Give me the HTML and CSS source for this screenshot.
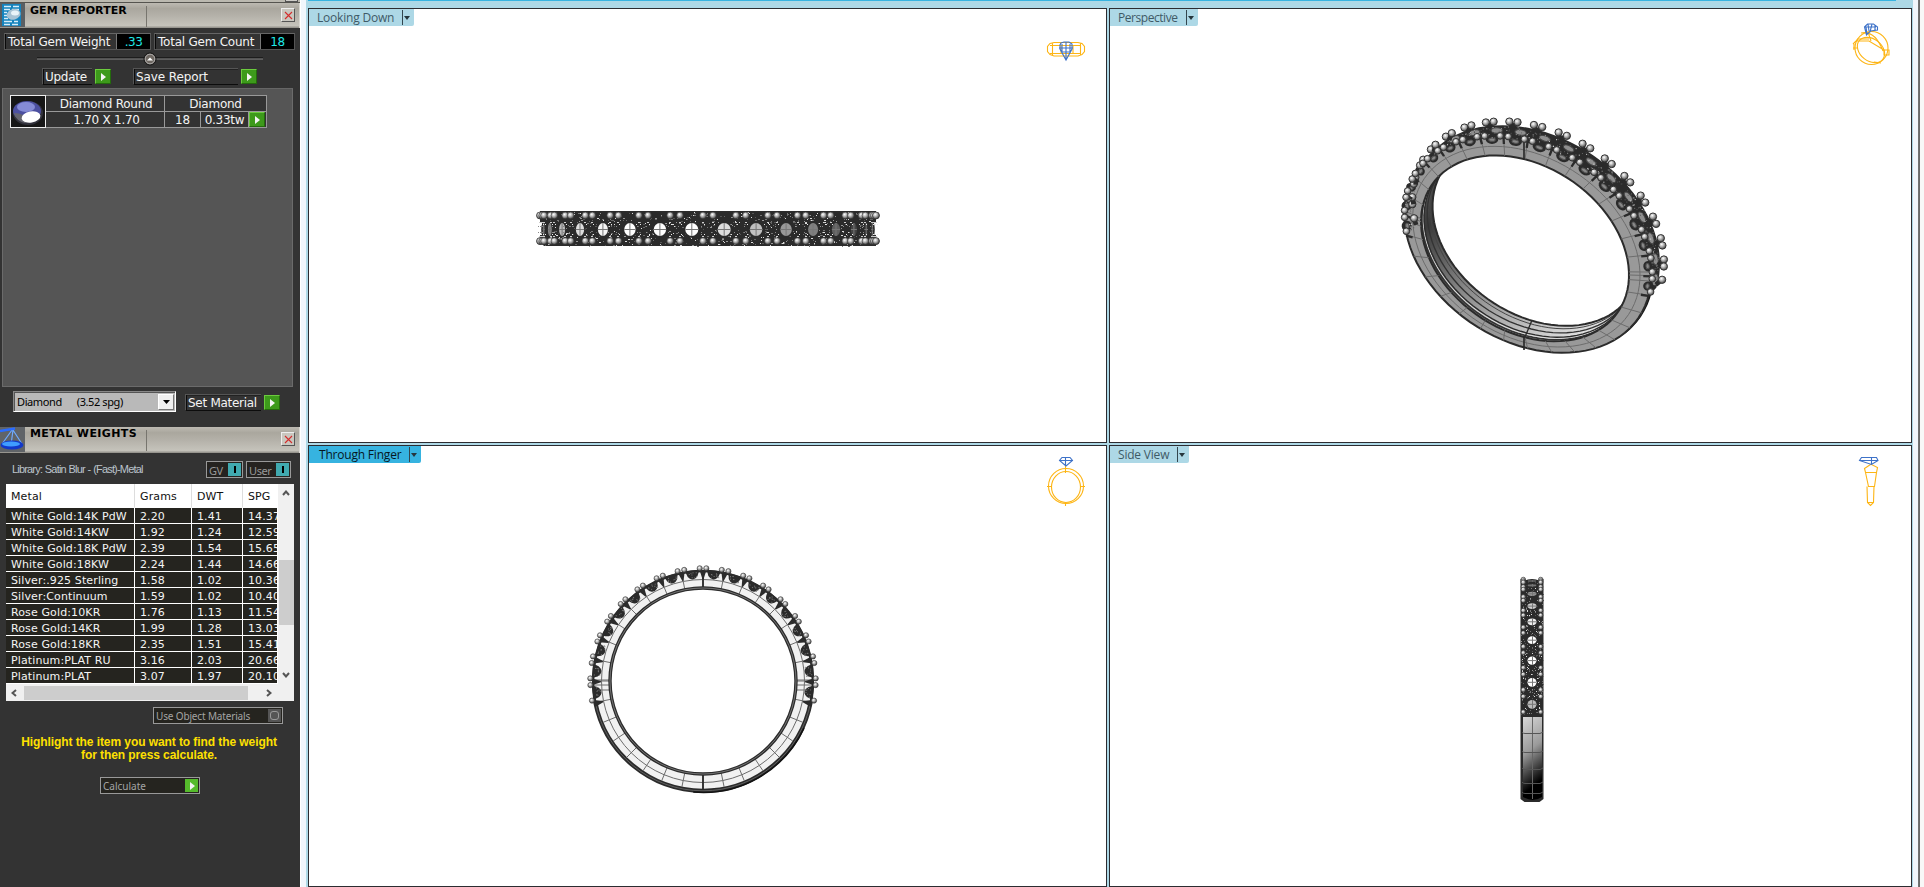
FILE: index.html
```html
<!DOCTYPE html>
<html lang="en">
<head>
<meta charset="utf-8">
<title>Gem Reporter</title>
<link rel="stylesheet" href="styles.css">
</head>
<body>
<div class="app">
  <aside class="sidebar">
    <div class="stub"><i></i></div>
    <header class="bar">
      <svg class="bar-icon" width="25" height="24" viewBox="0 0 25 24">
        <rect width="25" height="24" fill="#5a5f63"/><rect x="2" y="1" width="19" height="22" fill="#1583bd"/>
        <path d="M4 3.500h7M13 3.500h6M4 6.500h6M12 6.500h7M4 9.500h3M4 12.500h3M4 15.500h4M4 18.500h8M14 18.500h4M4 21.500h6M12 21.500h6" stroke="#d7eefa" stroke-width="1.400"/>
        <ellipse cx="13.500" cy="11.500" rx="7" ry="5.200" fill="#a9c3d4" transform="rotate(-15 13 11)"/><ellipse cx="15" cy="10" rx="4" ry="2.500" fill="#e9f3f8"/>
      </svg>
      <h1 class="bar-title">GEM REPORTER</h1>
      <span class="close"><svg width="9" height="9" viewBox="0 0 9 9"><path d="M1 1l7 7M8 1l-7 7" stroke="#d42c2c" stroke-width="1.100"/></svg></span>
    </header>
    <div class="totals">
      <div class="total t1"><span>Total Gem Weight</span><b>.33</b></div>
      <div class="total t2"><span>Total Gem Count</span><b>18</b></div>
    </div>
    <div class="splitter"><svg width="226" height="14" viewBox="0 0 226 14"><path d="M0 6h226" stroke="#080808" stroke-width="1"/><path d="M0 7h226" stroke="#888" stroke-width="1"/><circle cx="113" cy="7" r="6" fill="#6e6862" stroke="#111" stroke-width="1"/><circle cx="113" cy="7" r="4.800" fill="none" stroke="#bbb" stroke-width=".8"/><path d="M110 8.500l3-3 3 3z" fill="#fff"/></svg></div>
    <div class="actions">
      <span class="cmd cmd-update">Update</span><button class="go"></button>
      <span class="cmd cmd-save">Save Report</span><button class="go"></button>
    </div>
    <section class="gems">
      <div class="gem">
        <div class="thumb"><svg width="34" height="31" viewBox="0 0 34 31"><rect width="34" height="31" fill="#171717"/><ellipse cx="17" cy="17" rx="15" ry="12" fill="#32323c"/><ellipse cx="16" cy="15" rx="14" ry="10" fill="#4c50a0"/><ellipse cx="15" cy="11" rx="9" ry="5" fill="#858bd6"/><path d="M3 17q10 0 14 7l-3 3q-9-2-11-10z" fill="#65656f"/><ellipse cx="20" cy="21" rx="9.500" ry="5.500" fill="#fff" transform="rotate(-9 20 21)"/></svg></div>
        <div class="gem-grid">
          <span class="g-name">Diamond Round</span><span class="g-mat">Diamond</span>
          <span class="g-size">1.70 X 1.70</span><span>18</span><span>0.33tw</span><span class="g-go"><button class="go"></button></span>
        </div>
      </div>
    </section>
    <div class="material">
      <div class="combo"><span>Diamond</span><span class="spg">(3.52 spg)</span><i><svg width="7" height="4"><path d="M0 0h7l-3.500 4z"/></svg></i></div>
      <span class="cmd cmd-set">Set Material</span><button class="go"></button>
    </div>
    <header class="bar bar2">
      <svg class="bar-icon" width="25" height="25" viewBox="0 0 25 25">
        <rect width="25" height="25" fill="#606468"/>
        <path d="M12 3L2 17M13 3l9 14M13 3l-2 15" stroke="#6eaaff" stroke-width="1.200" fill="none"/><path d="M0 4l15-2.500" stroke="#2a6cff" stroke-width="2.500"/>
        <ellipse cx="12" cy="18" rx="11.500" ry="4.500" fill="#1238c9"/><ellipse cx="11" cy="17" rx="9" ry="2.400" fill="#3f9dff"/>
      </svg>
      <h1 class="bar-title">METAL WEIGHTS</h1>
      <span class="close"><svg width="9" height="9" viewBox="0 0 9 9"><path d="M1 1l7 7M8 1l-7 7" stroke="#d42c2c" stroke-width="1.100"/></svg></span>
    </header>
    <div class="library">
      <span class="lib-name">Library: Satin Blur - (Fast)-Metal</span>
      <span class="toggle tg-gv">GV<i></i></span><span class="toggle tg-user">User<i></i></span>
    </div>
    <div class="table-box">
      <div class="table">
        <div class="tr th"><span>Metal</span><span>Grams</span><span>DWT</span><span>SPG</span></div>
        <div class="tr"><span>White Gold:14K PdW</span><span>2.20</span><span>1.41</span><span>14.37</span></div>
        <div class="tr"><span>White Gold:14KW</span><span>1.92</span><span>1.24</span><span>12.59</span></div>
        <div class="tr"><span>White Gold:18K PdW</span><span>2.39</span><span>1.54</span><span>15.65</span></div>
        <div class="tr"><span>White Gold:18KW</span><span>2.24</span><span>1.44</span><span>14.66</span></div>
        <div class="tr"><span>Silver:.925 Sterling</span><span>1.58</span><span>1.02</span><span>10.36</span></div>
        <div class="tr"><span>Silver:Continuum</span><span>1.59</span><span>1.02</span><span>10.40</span></div>
        <div class="tr"><span>Rose Gold:10KR</span><span>1.76</span><span>1.13</span><span>11.54</span></div>
        <div class="tr"><span>Rose Gold:14KR</span><span>1.99</span><span>1.28</span><span>13.03</span></div>
        <div class="tr"><span>Rose Gold:18KR</span><span>2.35</span><span>1.51</span><span>15.41</span></div>
        <div class="tr"><span>Platinum:PLAT RU</span><span>3.16</span><span>2.03</span><span>20.66</span></div>
        <div class="tr"><span>Platinum:PLAT</span><span>3.07</span><span>1.97</span><span>20.10</span></div>
      </div>
      <div class="vscroll"><svg width="8" height="6"><path d="M1 5l3-3.500L7 5" class="chev"/></svg><i></i><svg width="8" height="6"><path d="M1 1l3 3.500L7 1" class="chev"/></svg></div>
      <div class="hscroll"><svg width="6" height="8"><path d="M5 1L1.500 4 5 7" class="chev"/></svg><i></i><svg width="6" height="8"><path d="M1 1l3.500 3L1 7" class="chev"/></svg></div>
    </div>
    <div class="flat flat-obj"><span>Use Object Materials</span><i class="off"></i></div>
    <p class="hint">Highlight the item you want to find the weight<br>for then press calculate.</p>
    <div class="flat flat-calc"><span>Calculate</span><button class="go"></button></div>
  </aside>
  <div class="gutter"></div>
  <main class="views">
    <div class="accent"></div>
    <section class="view">
      <div class="tab">Looking Down<i></i></div>
      <svg class="scene" id="top" viewBox="309 9 797 433"></svg>
    </section>
    <section class="view">
      <div class="tab tab-persp">Perspective<i></i></div>
      <svg class="scene" id="persp" viewBox="1110 9 801 433"></svg>
    </section>
    <section class="view">
      <div class="tab active">Through Finger<i></i></div>
      <svg class="scene" id="front" viewBox="309 446 797 440"></svg>
    </section>
    <section class="view">
      <div class="tab">Side View<i></i></div>
      <svg class="scene" id="side" viewBox="1110 446 801 440"></svg>
    </section>
  </main>
  <div class="edge"></div>
</div>
<svg width="0" height="0" class="defs"><defs>
  <radialGradient id="bead" cx=".4" cy=".35" r=".65"><stop offset="0" stop-color="#fff"/><stop offset=".45" stop-color="#b5b5b5"/><stop offset="1" stop-color="#444"/></radialGradient>
  <linearGradient id="shank" x1="0" y1="0" x2=".18" y2="1"><stop offset="0" stop-color="#d8d8d8"/><stop offset=".45" stop-color="#9a9a9a"/><stop offset=".72" stop-color="#3c3c3c"/><stop offset=".9" stop-color="#000"/></linearGradient>
  <linearGradient id="bore" x1="0" y1="0" x2=".7" y2="1"><stop offset="0" stop-color="#777"/><stop offset=".3" stop-color="#3a3a3a"/><stop offset=".6" stop-color="#8a8a8a"/><stop offset="1" stop-color="#e0e0e0"/></linearGradient>
</defs></svg>
<script src="rings.js"></script>
</body>
</html>
```

FILE: styles.css
```css
* { box-sizing: border-box; }
body { margin: 0; width: 1924px; height: 887px; overflow: hidden; background: #add8e6; font-family: Verdana, "DejaVu Sans", sans-serif; }
button { padding: 0; }
.app { display: flex; height: 887px; }
.defs { position: absolute; }

.sidebar { width: 300px; flex: none; background: #333; color: #f4f4f4; font-size: 12px; }
.gutter { width: 6px; flex: none; background: #f1f6fc; border-left: 1px solid #fff; }
.edge { width: 11px; flex: none; background: linear-gradient(90deg, #f1f6fc 5px, #777 5px, #666 7px, #f8f8f8 7px); }

.stub { height: 3px; background: #bbb9b0; border-bottom: 1px solid #55544f; display: flex; justify-content: flex-end; }
.stub i { width: 13px; height: 2px; margin-right: 2px; background: #cfcdc8; border: solid #555; border-width: 0 1px 1px; }

.bar { display: flex; height: 25px; background: linear-gradient(#bdbab2, #aaa79e 22%, #b4b1a9 50%, #c5c3bb 90%, #8c8a84); border-right: 1px solid #d8d6d0; }
.bar2 { height: 26px; }
.bar-icon { flex: none; }
.bar-title { margin: 3px 0 1px; padding-left: 5px; width: 122px; border-right: 1px solid #77756e; font-size: 11px; line-height: 10px; height: 21px; color: #000; letter-spacing: .05px; white-space: nowrap; }
.bar2 .bar-title { line-height: 8px; letter-spacing: .4px; }
.close { width: 14px; height: 14px; margin: 5px 4px 0 auto; background: #c9c7bf; border: 1px solid #eee; border-right-color: #555; border-bottom-color: #555; display: flex; align-items: center; justify-content: center; }

.totals { display: flex; gap: 3px; padding: 5px 0 0 4px; }
.total { display: flex; height: 17px; border: 1px solid #555; border-top-color: #666; line-height: 16px; white-space: nowrap; }
.total span { flex: 1; padding-left: 2px; border-left: 1px solid #0a0a0a; letter-spacing: -.23px; font-size: 12px; }
.total b { width: 34px; background: #000; color: #1fe8e8; font-weight: 400; text-align: center; border-left: 1px solid #777; letter-spacing: -.5px; }
.t1 { width: 147px; }
.t2 { width: 141px; }

.splitter { padding: 2px 0 0 37px; height: 18px; }
.splitter svg { display: block; }
.actions { display: flex; height: 20px; padding-left: 42px; }
.cmd { height: 17px; border: 1px solid #555; border-right: 0; border-bottom-color: #0c0c0c; box-shadow: inset 1px 0 #0c0c0c, inset 0 1px #222; padding-left: 2px; line-height: 16px; font-size: 12px; white-space: nowrap; letter-spacing: -.28px; }
.cmd-update { width: 50px; margin-right: 3px; }
.cmd-save { width: 105px; margin: 0 3px 0 22px; letter-spacing: -.1px; }
.go { flex: none; width: 16px; height: 15px; margin-top: 1px; border: 1px solid #6ccb3e; border-right-color: #246b0c; border-bottom-color: #246b0c; background: #3d9a1b; display: flex; align-items: center; padding-left: 5px; }
.go::before { content: ""; border: 4px solid transparent; border-left: 5px solid #f4f4f4; border-right: 0; }

.gems { height: 299px; margin: 0 7px 0 2px; background: #555; border: 1px solid #6b6b6b; border-top-color: #666; padding: 6px 0 0 7px; }
.gem { display: flex; width: 257px; }
.thumb { width: 36px; height: 33px; border: 1px solid #eee; flex: none; }
.thumb svg { display: block; }
.gem-grid { display: grid; grid-template-columns: 118px 35px 47px 17px; grid-template-rows: 15px 15px; gap: 1px; background: #999; border: 1px solid #999; border-left: 0; width: 221px; flex: none; }
.gem-grid span { background: #333; text-align: center; line-height: 16px; letter-spacing: -.25px; font-size: 12px; white-space: nowrap; }
.gem-grid .g-name { padding-left: 2px; }
.gem-grid .g-size { padding-left: 3px; }
.g-mat { grid-column: span 3; }
.g-go .go { margin: 0; }

.material { display: flex; padding: 4px 0 0 13px; height: 40px; }
.combo { width: 163px; height: 21px; display: flex; background: #b9b9b9; border: 1px solid #888; border-right-color: #fff; border-bottom-color: #fff; box-shadow: inset 1px 1px #555; color: #000; font: 11px/20px Tahoma, "Noto Sans", sans-serif; letter-spacing: -.4px; padding-left: 3px; }
.spg { margin-left: 15px; }
.combo i { margin: 2px 1px 1px auto; width: 16px; background: #f0f0f0; border: 1px solid #fff; border-right-color: #777; border-bottom-color: #777; display: flex; align-items: center; justify-content: center; }
.cmd-set { width: 76px; margin: 3px 3px 0 9px; }
.material .go { margin-top: 4px; }

.library { display: flex; height: 31px; padding: 8px 0 0 12px; color: #b8b8b8; }
.lib-name { width: 194px; font: 11px/16px "Liberation Sans", Arial, sans-serif; letter-spacing: -.82px; white-space: nowrap; word-spacing: .5px; color: #bcc4cc; }
.toggle { height: 17px; border: 1px solid #999; display: flex; justify-content: space-between; background: #252320; font: 11px/15px "Noto Sans", sans-serif; color: #999; padding: 1px 1px 1px 2px; letter-spacing: -.4px; }
.toggle i { width: 13px; background: #40aab0; display: flex; justify-content: center; align-items: center; }
.toggle i::before { content: ""; width: 2px; height: 7px; background: #000; }
.tg-gv { width: 37px; margin-right: 3px; }
.tg-user { width: 45px; }

.table-box { margin-left: 6px; width: 288px; display: grid; grid-template-columns: 272px 16px; grid-template-rows: 200px 17px; background: #f0f0f0; font-size: 11px; }
.table { overflow: hidden; background: #fff; border-right: 1px solid #fff; }
.tr { display: grid; grid-template-columns: 129px 57px 51px 60px; height: 16px; line-height: 17px; }
.tr span { background: #25241f; border-right: 1px solid #fff; border-bottom: 1px solid #fff; padding-left: 5px; white-space: nowrap; overflow: hidden; letter-spacing: .12px; }
.tr.th { height: 24px; line-height: 25px; color: #111; }
.tr.th span { background: #fff; border-right-color: #ddd; }
.vscroll { display: flex; flex-direction: column; align-items: center; padding: 6px 0; }
.vscroll i { width: 15px; height: 65px; background: #cdcdcd; margin: 64px 0 auto; }
.hscroll { grid-column: span 2; display: flex; align-items: center; padding-left: 5px; }
.hscroll i { width: 224px; height: 14px; background: #cdcdcd; margin: 0 18px 0 7px; }
.chev { fill: none; stroke: #555; stroke-width: 2; }

.flat { display: flex; height: 17px; border: 1px solid #999; background: #25241f; color: #a4a4a4; font: 10px/16px "Noto Sans", sans-serif; padding: 1px; justify-content: space-between; white-space: nowrap; }
.flat span { padding-left: 1px; line-height: 14px; }
.flat .go { width: 13px; height: 13px; margin: 0; border: 0; background: #55bb2b; }
.flat-obj { width: 130px; margin: 6px 0 0 153px; letter-spacing: -.15px; }
.off { width: 13px; background: #555; display: flex; align-items: center; justify-content: center; }
.off::before { content: ""; width: 7px; height: 7px; border: 1px solid #999; border-radius: 3px; }
.hint { margin: 12px 0 0; width: 298px; text-align: center; color: #ffe000; font: bold 12px/13px "Liberation Sans", Arial, sans-serif; letter-spacing: -.08px; white-space: nowrap; }
.flat-calc { width: 100px; margin: 15px 0 0 100px; letter-spacing: 0; }

.views { width: 1607px; flex: none; position: relative; display: grid; grid-template-columns: 799px 803px; grid-template-rows: 435px 442px; gap: 2px; padding: 8px 0 0 2px; background: #add8e6; }
.accent { position: absolute; left: 2px; top: 0; width: 1588px; height: 1px; background: #36b3e0; }
.view { border: 1px solid #2c2c31; background: #fff; display: grid; overflow: hidden; }
.view > * { grid-area: 1 / 1; }
.scene { width: 100%; height: 100%; display: block; }
.tab { z-index: 1; justify-self: start; align-self: start; display: flex; align-items: center; height: 17px; padding: 0 4px 0 8px; background: #add8e6; color: #3f5a66; font: 12px/17px "Open Sans", "Noto Sans", sans-serif; letter-spacing: -.2px; border-bottom-right-radius: 2px; white-space: nowrap; }
.tab-persp { letter-spacing: -.45px; }
.tab i { margin-left: 8px; height: 15px; border-left: 1px solid #33464e; display: flex; align-items: center; padding-left: 1px; }
.tab i::after { content: ""; border: 3.5px solid transparent; border-top: 4px solid #26363d; border-bottom: 0; }
.tab.active { background: #36b3e0; color: #06171f; padding-left: 10px; }
```

FILE: rings.js
```js
const DARK = '#2b2b2b', MID = '#6c6c6c', RAD = Math.PI / 180, STEP = 11.3;
let seed = 7;
const rnd = () => (seed = (seed * 16807) % 2147483647) / 2147483647;
const n = v => v.toFixed(1);
const line = (x1, y1, x2, y2, c, w = 1) => `<path d="M${n(x1)} ${n(y1)}L${n(x2)} ${n(y2)}" stroke="${c}" stroke-width="${w}" fill="none"/>`;
const bead = (x, y, r = 3, w = .6) => `<circle cx="${n(x)}" cy="${n(y)}" r="${r}" fill="url(#bead)" stroke="#333" stroke-width="${w}"/>`;
const speck = (x, y, c, w = 1, h = 1) => `<rect x="${Math.round(x)}" y="${Math.round(y)}" width="${w}" height="${h}" fill="${c}"/>`;
const draw = (id, s) => { document.getElementById(id).innerHTML = s; };
const GREYS = ['#777', '#999', '#555', '#666', '#ddd'];
const icon = s => `<g fill="none" stroke-width="1.1">${s}</g>`;
const GOLD = 'stroke="#fdb515"', BLUE = 'stroke="#3e72c8"';

// Band seen from above
function topView() {
  const cx = 708, cy = 229, R = 165;
  let s = `<path d="M540 211H876V222H874V235H876V246H544L540 242V235H542V222H540Z" fill="${DARK}"/>`;
  for (let i = 0; i < 750; i++) {
    const x = 543 + rnd() * 329, y = 212 + rnd() * 34;
    s += speck(x, y, GREYS[Math.floor(rnd() * 5)], rnd() < .35 ? 2 : 1);
  }
  const shade = ['#444', '#555', '#888', '#bbb', '#ddd', '#f4f4f4', '#fff', '#fff', '#fff', '#ddd', '#c0c0c0', '#999', '#808080', '#606060', '#444', '#333', '#333'];
  for (let i = -8; i < 8; i++) {
    const a = (i + .5) * STEP * RAD;
    const x = cx + R * Math.sin(a), rx = Math.max(1, 6.5 * Math.cos(a)), c = shade[i + 8 + (i < 0 ? 1 : 1)] || '#333';
    s += `<ellipse cx="${n(x)}" cy="229.500" rx="${n(rx + 1.5)}" ry="8" fill="${DARK}"/><ellipse cx="${n(x)}" cy="229.500" rx="${n(rx)}" ry="6.500" fill="${c}"/>`;
    s += line(x - rx, 229.5, x + rx, 229.5, '#777') + line(x, 223, x, 236, '#777');
  }
  for (let k = -8; k <= 8; k++) for (const d of [-1.700, 1.700]) {
    const a = (k * STEP + d) * RAD, x = cx + 168 * Math.sin(a);
    for (const e of [-1, 1]) {
      s += bead(x, cy - .7 + e * 12.8, 3.4);
      s += speck(x - 1, cy + e * 7, '#ccc', 2, 1) + speck(x + 1, cy + e * 5, '#eee') + speck(x - 2, cy + e * 3, '#888');
    }
  }
  s += icon(`<g ${GOLD}><path d="M1050 43.500l4-1h24l4 1 2.500 3v5l-2.500 3-4 1.500h-24l-4-1.500-2.500-3v-5zM1050 45.500h31M1050 53.500h31M1052.500 43v12M1061 45v9M1073 45v9M1080.500 43v12"/></g><g ${BLUE}><path d="M1061 43l3-1h5l3 2v5l-6 11-6-11v-4zM1059 48h14M1066 42v18M1062 44v9M1070 44v9M1061 52h10"/></g>`);
  draw('top', s);
}

// Band seen along the finger axis
function frontView() {
  const cx = 703, cy = 681, p = (r, t) => [cx + r * Math.sin(t * RAD), cy - r * Math.cos(t * RAD)];
  let s = `<circle cx="703" cy="681" r="102" fill="none" stroke="#f1f1f1" stroke-width="18"/>`;
  const [ax, ay] = p(109.800, -101), [bx, by] = p(109.800, 101);
  s += `<path d="M${ax} ${ay}A109.8 109.8 0 0 0 ${bx} ${by}" fill="none" stroke="${DARK}" stroke-width="4.200"/>`;
  s += `<path d="M${ax} ${ay}A109.8 109.8 0 0 0 ${bx} ${by}" fill="none" stroke="${MID}" stroke-width=".8"/>`;
  s += `<path d="M${p(111.500, 115)}A111.5 111.5 0 0 1 ${p(111.500, 185)}" fill="none" stroke="#111" stroke-width="1.500"/>`;
  s += `<path d="M${ax} ${ay}A109.8 109.8 0 1 1 ${bx} ${by}" fill="none" stroke="${DARK}" stroke-width="2.200"/>`;
  s += `<circle cx="703" cy="681" r="101.500" fill="none" stroke="${MID}"/>`;
  for (let k = 0; k < 32; k++) {
    const t = k * 360 / 32, a = p(94, t), b = p(108, t);
    s += line(...a, ...b, MID);
  }
  for (const y of [680, 685, 690]) s += line(594, y, 609, y, MID) + line(797, y, 812, y, MID);
  s += line(703, 570, 703, 589, DARK, 1.8) + line(703, 775, 703, 790, DARK, 1.8);
  s += `<circle cx="703" cy="681" r="93" fill="none" stroke="${DARK}" stroke-width="3.400"/><circle cx="703" cy="681" r="93" fill="none" stroke="#888" stroke-width=".8"/>`;
  for (let i = -9; i < 9; i++) {
    const t = (i + .5) * STEP, [x, y] = p(110.600, t);
    s += `<g transform="translate(${n(x)} ${n(y)}) rotate(${n(t)})"><path d="M-10.500 0L-6-.5H6L10.500 0V1.500H6.500Q5.500 6 3 7.500Q0 9.500-3 7.500Q-5.500 6-6.500 1.500H-10.500Z" fill="${DARK}"/>`;
    for (let j = 0; j < 9; j++) s += `<rect x="${n(-5 + rnd() * 10)}" y="${n(1 + rnd() * 6)}" width="1" height="1" fill="#777"/>`;
    s += '</g>';
  }
  for (let k = -9; k <= 9; k++) {
    const [x, y] = p(110, k * STEP);
    s += `<path transform="translate(${n(x)} ${n(y)}) rotate(${n(k * STEP)})" d="M-3.500 -1H3.500L.6 8H-.6Z" fill="${DARK}"/>`;
    for (const d of [-1.700, 1.700]) if (Math.abs(k * STEP + d) < 101.8) s += bead(...p(112.700, k * STEP + d), 2.6);
  }
  s += icon(`<g ${GOLD}><path d="M1065.500 466v7"/><circle cx="1066" cy="486" r="17.500"/><ellipse cx="1066" cy="487" rx="14.500" ry="15.500"/><path d="M1047 486.500h5M1080 486.500h5M1065.500 502v4"/></g><path ${BLUE} d="M1062 457.500h8l2.500 3-6.500 5.500-6.500-5.500zM1059 460.500h14M1065.500 458v8"/>`);
  draw('front', s);
}

// Band seen edge-on
function sideView() {
  const cx = 1532, cy = 692.5, R = 112;
  let s = `<path d="M1520.500 579l4 1h15l4-1V799l-4 3h-15l-4-3z" fill="${DARK}"/>`;
  for (let i = 0; i < 420; i++) s += speck(1521 + rnd() * 22, 581 + rnd() * 133, GREYS[Math.floor(rnd() * 5)]);
  const sh = ['#444', '#555', '#999', '#ccc', '#eee', '#fff', '#fff', '#fff', '#bbb'];
  for (let i = 0; i < 9; i++) {
    const a = (i + .5) * STEP * RAD, y = cy - R * Math.cos(a), ry = Math.max(.6, 4.4 * Math.sin(a));
    s += `<ellipse cx="${cx}" cy="${n(y)}" rx="6" ry="${n(ry + 1.5)}" fill="${DARK}"/><ellipse cx="${cx}" cy="${n(y)}" rx="4.500" ry="${n(ry)}" fill="${sh[i]}"/>` + line(cx - 4, y, cx + 4, y, '#777') + line(cx + .5, y - ry, cx + .5, y + ry, '#777');
  }
  for (let k = 0; k <= 9; k++) for (const d of [-1.700, 1.700]) {
    const t = k * STEP + d;
    if (t < 0 || t > 101) continue;
    const y = cy - 113 * Math.cos(t * RAD);
    s += bead(1523.300, y, 2.3) + bead(1540.700, y, 2.3);
  }
  s += '<path d="M1523 717h19v80q-9 6-19 0z" fill="url(#shank)"/><path d="M1532.500 717v82" stroke="#666"/>';
  for (const y of [732, 751, 768, 782, 792]) s += `<path d="M1522 ${y}q1 1.500 3 1.500h15l3-1.500" fill="none" stroke="#555"/>`;
  s += icon(`<g ${GOLD}><path d="M1870.500 464.500l-6 4 1 4h11l1-5-6-3zM1865.500 472.500l3 14h6l2-14M1867 486.500l.5 16 3 3 3-3 .5-16M1868 502.500h6"/></g><path ${BLUE} d="M1861.500 457.500h15l1.500 3-6.500 4-12-4zM1859 460.500h19M1871.500 458v7"/>`);
  draw('side', s);
}

// Perspective: each ring edge is an affine image of a circle, in thirds of a pixel
function perspView() {
  const pt = (c, ux, rx, ry, t) => [c[0] + Math.sin(t * RAD) * rx, c[1] - Math.cos(t * RAD) * ux + Math.sin(t * RAD) * ry];
  const mix = (f, t, d = 0) => {
    const a = pt([405, 430], 267, 312, 80, t), b = pt([413, 420], 310, 370, 92, t);
    return [a[0] + (b[0] - a[0]) * f + 36 * d, a[1] + (b[1] - a[1]) * f - 48 * d];
  };
  const curve = (f, d, t0 = 0, t1 = 360) => {
    let q = '';
    for (let t = t0; t <= t1; t += 4) q += (q ? 'L' : 'M') + mix(f, t, d).map(n).join(' ');
    return q;
  };
  let s = '<g transform="translate(1390 105) scale(.33333)">';
  let body = '';
  for (let t = -100; t <= 104; t += 4) body += (body ? 'L' : 'M') + mix(1, t, .75).map(n).join(' ');
  for (let t = 104; t >= -100; t -= 4) body += 'L' + mix(.9, t, 0).map(n).join(' ');
  s += `<path d="${body}Z" fill="${DARK}"/>`;
  s += `<path d="${curve(1, .12, 92, 168)}" stroke="#151515" stroke-width="8" fill="none"/>`;
  s += `<clipPath id="hole"><path d="${curve(0, 0)}Z"/></clipPath>`;
  s += '<g clip-path="url(#hole)">';
  s += `<path fill-rule="evenodd" d="${curve(0, 0)}Z${curve(0, .95)}Z" fill="url(#bore)"/>`;
  for (const [d, c, w] of [[.1, '#333', 5], [.18, '#ddd', 3], [.25, DARK, 4], [.52, '#333', 4], [.78, '#444', 3], [.96, DARK, 6]]) s += `<path d="${curve(0, d)}" fill="none" stroke="${c}" stroke-width="${w}"/>`;
  s += '</g>';
  s += `<path fill-rule="evenodd" d="${curve(1, 0)}Z${curve(0, 0)}Z" fill="#999" stroke="${DARK}" stroke-width="6"/>`;
  s += `<path d="${curve(.5, 0)}" fill="none" stroke="${MID}" stroke-width="3"/>`;
  for (let k = 0; k < 32; k++) s += line(...mix(0, k * 11.25), ...mix(1, k * 11.25), MID, 3);
  for (const t of [88, 93, -88, -93]) s += line(...mix(0, t), ...mix(1, t), MID, 3);
  s += line(402, 100, 402, 165, DARK, 5) + line(402, 695, 402, 735, DARK, 5) + line(425, 648, 404, 698, DARK, 4);
  for (let i = -9; i < 9; i++) {
    const t = (i + .5) * STEP, [x, y] = mix(.9, t), v = mix(1, t, .42);
    const ang = Math.atan2(Math.cos(t * RAD) * 90 + Math.sin(t * RAD) * 310, Math.cos(t * RAD) * 372) / RAD;
    const w = 12 + 9 * Math.abs(Math.cos((t - 20) * RAD));
    const turn = (a, b) => `transform="rotate(${n(ang)} ${n(a)} ${n(b)})"`;
    s += `<ellipse cx="${n(x)}" cy="${n(y)}" rx="${n(w)}" ry="15" ${turn(x, y)} fill="${DARK}"/>`;
    s += `<ellipse cx="${n(x)}" cy="${n(y + 2)}" rx="${n(w * .5)}" ry="5" ${turn(x, y)} fill="#888" stroke="#555" stroke-width="3"/>`;
    if (t > -40) s += `<ellipse cx="${n(v[0])}" cy="${n(v[1])}" rx="17" ry="8" ${turn(v[0], v[1])} fill="#8e8e8e" stroke="#444" stroke-width="3"/>`;
    for (let j = 0; j < 26; j++) {
      const q = mix(.95 + rnd() * .08, t - 5.6 + rnd() * 11.3, rnd() * .7);
      s += `<rect x="${n(q[0])}" y="${n(q[1])}" width="3" height="3" fill="${GREYS[Math.floor(rnd() * 5)]}"/>`;
    }
  }
  for (let k = -9; k <= 9; k++) {
    const t = k * STEP;
    s += line(...mix(.65, t), ...mix(1.05, t), DARK, 7);
    for (const d of [-1.900, 1.900]) {
      if (Math.abs(t + d) > 102) continue;
      const b = mix(1.13, t + d, .84), f = mix(1.03, t + d, .06);
      s += line(...mix(.95, t, .7), ...b, DARK, 14);
      s += bead(...b, 11, 3) + bead(...f, 10, 3);
    }
  }
  s += '</g>';
  s += icon(`<g ${GOLD}><ellipse cx="1871.500" cy="48" rx="16.500" ry="16.500"/><ellipse cx="1871" cy="50" rx="15" ry="11" transform="rotate(38 1871 50)"/><path d="M1853 44l5-5h11M1856 41h13l15 9M1861 33q14-3 22 18M1868 32l3 9M1853 48h5M1884 50h5v5h-5zM1874 62l7 1M1854 44v6"/></g><g ${BLUE}><path d="M1864.500 27l3-3h6l4 3v3l-7 1-4 4zM1865 27h11M1868 24l1 7M1872 24l-2 8M1875 25v5M1866 27l1 7"/></g>`);
  draw('persp', s);
}

topView();
perspView();
frontView();
sideView();
```
